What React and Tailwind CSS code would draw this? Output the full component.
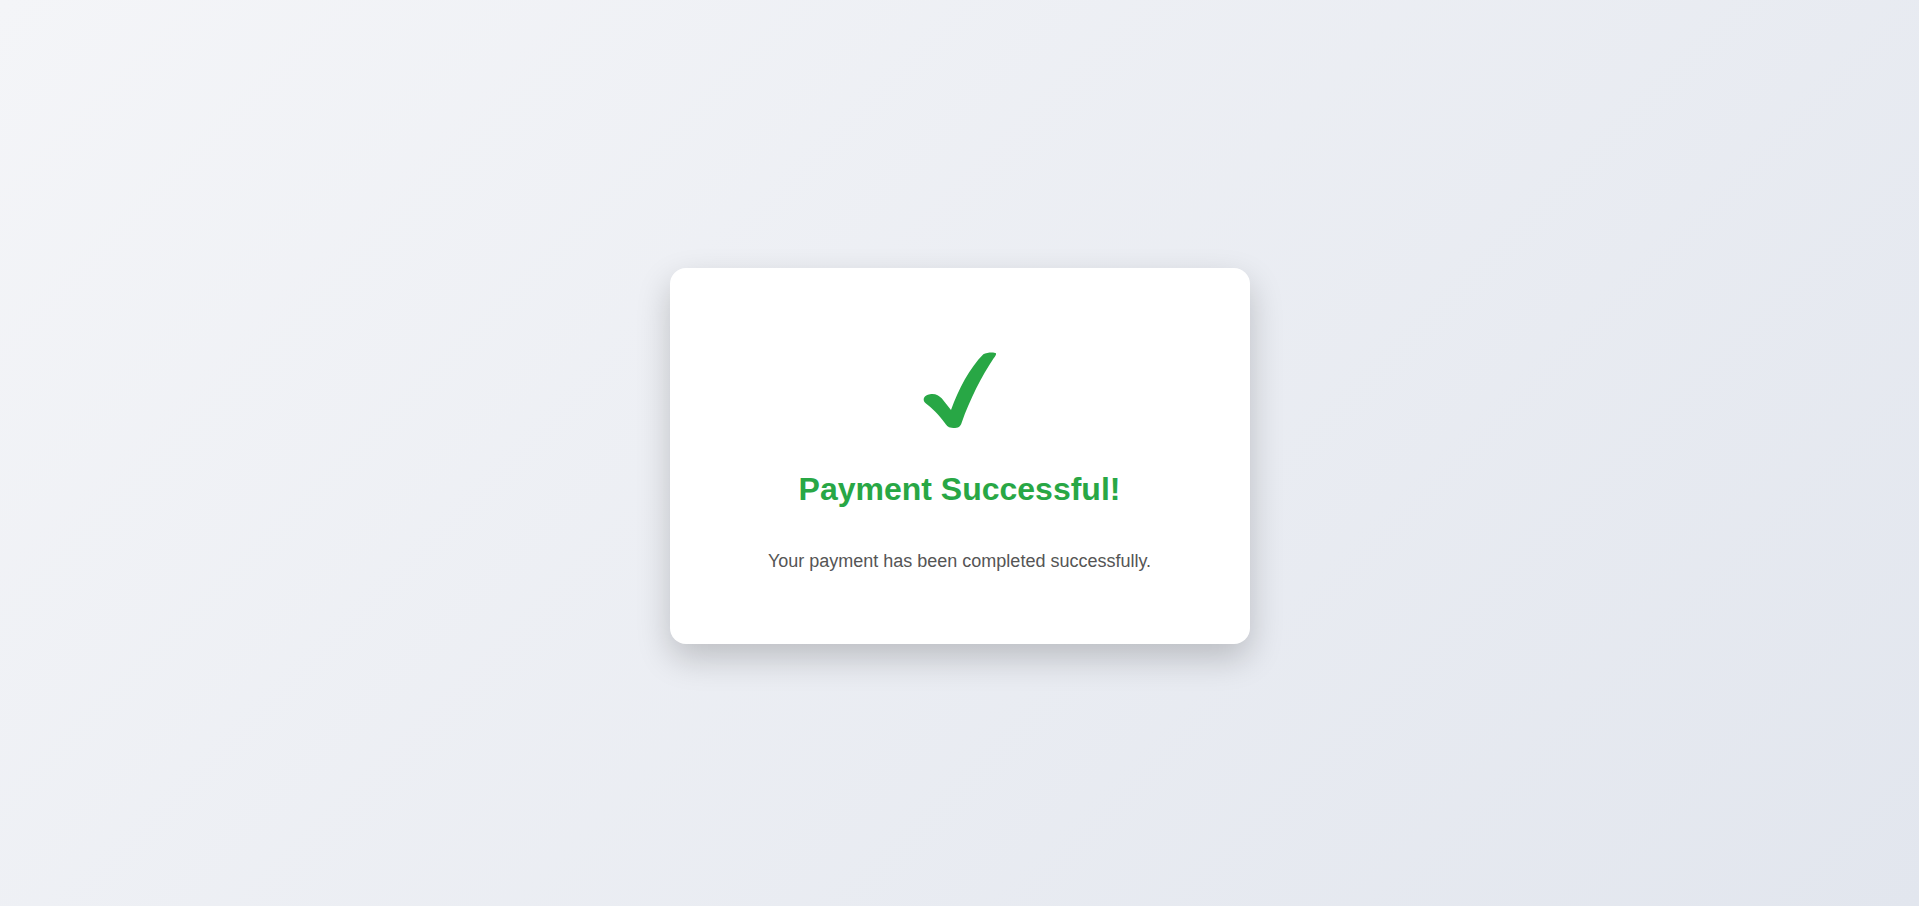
export default function App() {
  return (
    <div className="min-h-screen w-full flex items-center justify-center pt-[5px] bg-[linear-gradient(135deg,#f4f5f8_0%,#e2e6ee_100%)] font-['Liberation_Sans',Arial,sans-serif]">
      <div className="w-[580px] bg-white rounded-2xl shadow-[0_14px_34px_rgba(0,0,0,0.2)] pt-[78px] pb-[69px] px-10 flex flex-col items-center text-center">
        {/* check mark */}
        <svg className="w-[90px] h-[90px] block" viewBox="0 0 270 270" aria-hidden="true">
          <path
            fill="#28a745"
            d="M45 145 C60 142 72 149 80 157 L108 192 C130 130 165 65 205 25 C215 20 235 18 243 22 C245 26 240 32 236 37 C200 90 165 160 140 230 C136 242 130 246 115 246 C100 246 96 240 90 232 C70 205 52 188 32 172 C20 162 27 147 45 145 Z"
          />
        </svg>
        <h1 className="mt-[33px] text-[32px] leading-[40px] font-bold text-[#28a745]">
          Payment Successful!
        </h1>
        <p className="mt-[38px] text-lg leading-7 text-[#555]">
          Your payment has been completed successfully.
        </p>
      </div>
    </div>
  );
}
